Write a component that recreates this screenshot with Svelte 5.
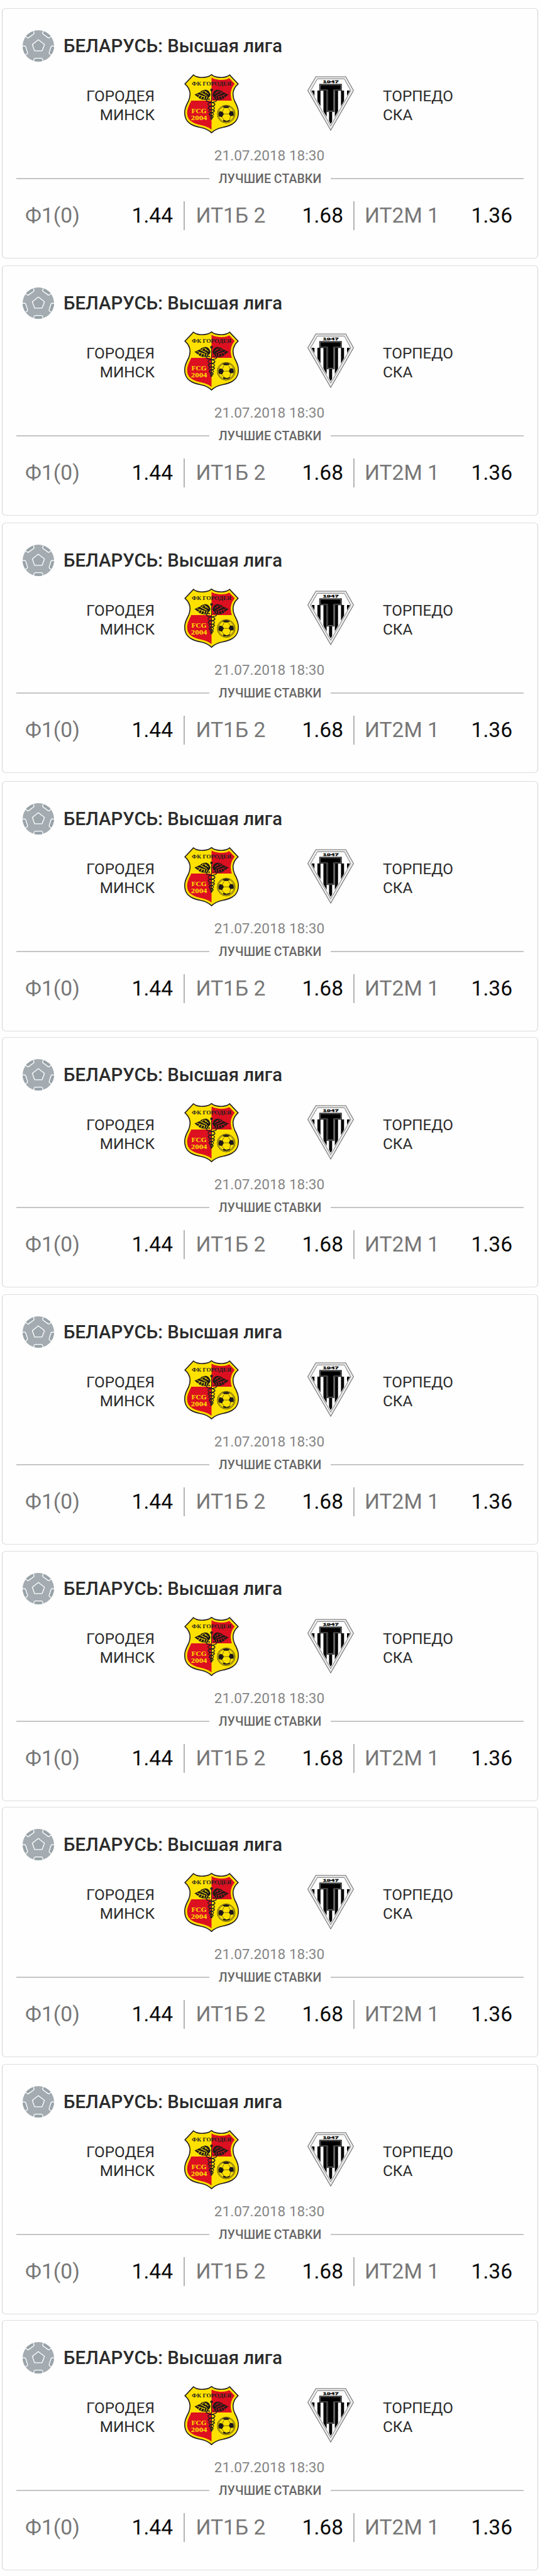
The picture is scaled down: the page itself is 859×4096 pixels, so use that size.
<script>
  // gap: distance from the previous card, in px
  const gaps = [13, 11, 11, 13, 9, 11, 10, 9, 11, 9];
  const matches = gaps.map((gap, id) => ({
    id,
    gap,
    league: 'БЕЛАРУСЬ: Высшая лига',
    home: ['ГОРОДЕЯ', 'МИНСК'],
    away: ['ТОРПЕДО', 'СКА'],
    date: '21.07.2018 18:30',
    bets: [
      { name: 'Ф1(0)', odd: '1.44' },
      { name: 'ИТ1Б 2', odd: '1.68' },
      { name: 'ИТ2М 1', odd: '1.36' }
    ]
  }));
  const turns = [0, 72, 144, 216, 288];
  const shield =
    'M264 40C240 64 160 74 123 43L57 112C100 150 104 200 85 245C55 300 50 330 59 368C72 420 120 440 180 452C220 460 245 475 264 493C283 475 308 460 348 452C408 440 456 420 469 368C478 330 473 300 443 245C424 200 428 150 471 112L405 43C368 74 288 64 264 40Z';
</script>

{#snippet ball()}
  <svg class="ball" viewBox="57 57 242 242" aria-hidden="true">
    <clipPath id="ball-clip"><circle cx="178" cy="178" r="121" /></clipPath>
    <circle cx="178" cy="178" r="121" fill="#a4acb1" />
    <g clip-path="url(#ball-clip)" stroke="#fff" stroke-width="6.5" stroke-linejoin="round">
      {#each turns as turn}
        <path
          d="M139 306L146 280Q148 273 155 273H201Q208 273 210 280L217 306"
          fill="#98a3a9"
          transform="rotate({turn} 178 178)"
        />
      {/each}
      <path d="M178 131L225 167L207 216H149L132 167Z" fill="#9ca6ab" />
    </g>
  </svg>
{/snippet}

{#snippet wing(slit)}
  <path
    d="M256 196C246 162 226 154 204 161C192 163 182 168 176 176C162 180 150 186 146 190L131 195L150 210L168 224L178 232L202 236L222 236L236 226L252 208Z"
    fill="#1f1a17"
  />
  <path
    d="M206 166L240 192M178 180L226 203M150 193L208 213M160 219L176 197M180 230L194 203M204 234L212 208M222 232L230 208M190 178L200 168M214 184L224 172"
    stroke={slit}
    stroke-width="5"
    fill="none"
  />
{/snippet}

{#snippet gorodeya()}
  <svg class="crest-home" viewBox="52 37 424 460" aria-hidden="true">
    <clipPath id="shield-clip"><path d={shield} /></clipPath>
    <g clip-path="url(#shield-clip)">
      <rect x="52" y="37" width="424" height="460" fill="#ffe100" />
      <path d="M264 37H476V242H264ZM52 242H264V497H52Z" fill="#dc1020" />
      <path d={shield} fill="none" stroke="#ffe100" stroke-width="38" />
    </g>
    <path d={shield} fill="none" stroke="#231f20" stroke-width="8" />
    <text x="264" y="124" class="motto" text-anchor="middle" textLength="308" lengthAdjust="spacingAndGlyphs">ФК ГОРОДЕЯ</text>
    {@render wing('#ffe100')}
    <g transform="matrix(-1 0 0 1 528 0)">{@render wing('#dc1020')}</g>
    <g fill="none" stroke="#231f20">
      <circle cx="264" cy="159" r="10" fill="#231f20" />
      <path d="M264 165V390" stroke-width="5" />
      <path
        stroke-width="8"
        d="M252 232C228 226 218 236 228 246C242 260 290 252 290 272C290 294 240 278 238 300C240 320 284 308 286 322C284 342 248 330 246 348C248 362 276 356 276 368C274 380 258 376 258 390"
      />
      <path
        stroke-width="6"
        d="M276 232C300 226 310 236 300 246C286 260 234 254 236 272C238 294 288 280 288 300C286 320 244 308 242 322C244 342 278 330 280 348C278 362 252 356 252 368C254 380 270 376 268 388"
      />
    </g>
    <text x="166" y="340" class="mark" text-anchor="middle" textLength="118" lengthAdjust="spacingAndGlyphs">FCG</text>
    <text x="167" y="394" class="mark year" text-anchor="middle" textLength="126" lengthAdjust="spacingAndGlyphs">2004</text>
    <circle cx="378" cy="347" r="69" fill="#ffe100" stroke="#231f20" stroke-width="4" />
    <circle cx="378" cy="347" r="61" fill="none" stroke="#231f20" stroke-width="3" />
    <g fill="#1c1819">
      <path d="M349 290Q378 276 407 290L392 300H364Z" />
      <path d="M328 325L350 330L360 346L345 372L322 365Q314 345 328 325Z" />
      <path d="M428 325L408 325L398 346L411 364L435 360Q441 343 428 325Z" />
      <path d="M358 391L381 400L408 392L406 402Q382 412 352 404Z" />
    </g>
    <path
      d="M360 303L348 330M396 303L410 326M360 346L398 346M345 372L360 391M411 364L406 393"
      stroke="#231f20"
      stroke-width="3"
      fill="none"
    />
  </svg>
{/snippet}

{#snippet torpedo()}
  <svg class="crest-away" viewBox="53 50 363 426" aria-hidden="true">
    <path d="M119 54H352L413 163L235 472L56 163Z" fill="#ededed" stroke="#6a6a6a" stroke-width="5" />
    <path d="M131 71H341L391 163L235 438L78 163Z" fill="#fff" stroke="#6a6a6a" stroke-width="4.5" />
    <clipPath id="stripes-clip"><path d="M84 163H386L235 422Z" /></clipPath>
    <g clip-path="url(#stripes-clip)">
      <path
        d="M85 163h23v270h-23zM131 163h24v270h-24zM178 163h25v270h-25zM222 328h24v110h-24zM267 163h25v270h-25zM315 163h24v270h-24zM362 163h24v270h-24z"
        fill="#000"
      />
    </g>
    <path d="M147 112H320V163H263V328H205V163H147Z" fill="#000" stroke="#333" stroke-width="3" />
    <path d="M153 118H314V157H257V322H211V157H153Z" fill="#000" stroke="#8a8a8a" stroke-width="4" />
    <text x="235" y="104" class="founded" text-anchor="middle" textLength="124" lengthAdjust="spacingAndGlyphs">1947</text>
  </svg>
{/snippet}

<main>
  {#each matches as match (match.id)}
    <article class="card" style="margin-top: {match.gap}px">
      <header>
        {@render ball()}
        <h2>{match.league}</h2>
      </header>
      <div class="teams">
        <p class="team home">{#each match.home as line}<span>{line}</span>{/each}</p>
        {@render gorodeya()}
        {@render torpedo()}
        <p class="team away">{#each match.away as line}<span>{line}</span>{/each}</p>
      </div>
      <time>{match.date}</time>
      <div class="best"><span>ЛУЧШИЕ СТАВКИ</span></div>
      <div class="bets">
        {#each match.bets as bet}
          <div class="bet">
            <span class="name">{bet.name}</span>
            <span class="odd">{bet.odd}</span>
          </div>
        {/each}
      </div>
    </article>
  {/each}
</main>

<style>
  :global(body) {
    background: #fefefe;
  }
  main {
    display: flex;
    flex-direction: column;
    width: 859px;
    height: 4096px;
    overflow: hidden;
    font-family: Roboto, 'Liberation Sans', sans-serif;
  }
  .card {
    box-sizing: border-box;
    flex: none;
    height: 398px;
    margin: 0 3px;
    border: 1px solid;
    border-color: #dedede #d2d2d2;
    border-radius: 6px;
    background: #fefefe;
    display: flex;
    flex-direction: column;
  }
  header {
    display: flex;
    align-items: center;
    gap: 15px;
    height: 50px;
    margin: 34px 0 0 32px;
  }
  .ball {
    width: 50px;
    height: 50px;
  }
  h2 {
    margin: 0;
    font-size: 29.4px;
    line-height: 34px;
    font-weight: 500;
    color: #2b2b2b;
    white-space: nowrap;
  }
  .teams {
    display: flex;
    height: 94px;
    margin-top: 20px;
  }
  .team {
    display: flex;
    flex-direction: column;
    margin: 20px 0 0;
    font-size: 24.3px;
    line-height: 29.5px;
    color: #2b2b2b;
  }
  .home {
    width: 242px;
    align-items: flex-end;
  }
  .away {
    margin-left: 46px;
  }
  .crest-home {
    width: 87px;
    height: 94px;
    margin-left: 47px;
  }
  .crest-away {
    width: 74px;
    height: 87px;
    margin: 3px 0 0 109px;
  }
  .motto {
    font: bold 43px 'Liberation Serif', serif;
    fill: #231f20;
  }
  .mark {
    font: bold 55px 'Liberation Serif', serif;
    fill: #ffe100;
  }
  .year {
    font-size: 50px;
  }
  .founded {
    font: bold 30px 'Liberation Sans', sans-serif;
    stroke: #000;
    stroke-width: 1.5px;
  }
  time {
    margin-top: 23px;
    padding-right: 2px;
    text-align: center;
    font-size: 22.6px;
    line-height: 26px;
    color: #868686;
  }
  .best {
    display: flex;
    align-items: center;
    gap: 15px;
    height: 24px;
    margin: 11px 22px 0 22px;
    font-size: 19.6px;
    font-weight: 500;
    line-height: 24px;
    color: #666;
  }
  .best span {
    margin-top: 2px;
  }
  .best::before,
  .best::after {
    content: '';
    flex: 1;
    height: 2px;
    background: #c5c5c5;
  }
  .bets {
    display: flex;
    height: 46px;
    margin: 24px 0 0 36px;
  }
  .bet {
    box-sizing: border-box;
    display: flex;
    justify-content: space-between;
    align-items: center;
    width: 270px;
    padding: 0 16px 0 17.5px;
    border-right: 2px solid #b4b4b4;
    font-size: 33.6px;
    line-height: 46px;
    white-space: nowrap;
  }
  .bet:first-child {
    width: 254px;
    padding: 0 17px 0 0;
  }
  .bet:last-child {
    padding: 0 19px 0 16px;
    border: 0;
  }
  .name {
    color: #777;
  }
  .odd {
    color: #0a0a0a;
  }
</style>
